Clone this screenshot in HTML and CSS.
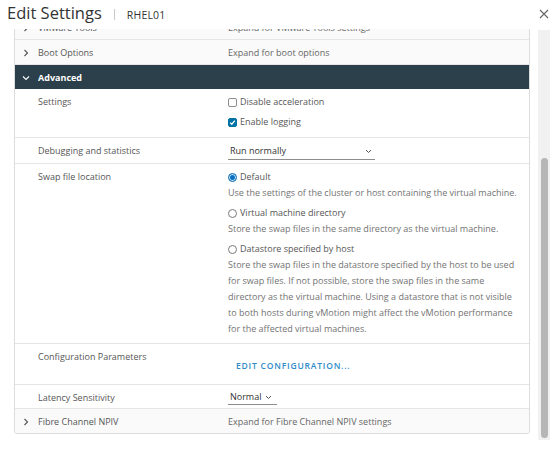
FILE: index.html
```html
<!DOCTYPE html>
<html>
<head>
<meta charset="utf-8">
<link rel="stylesheet" href="styles.css">
</head>
<body>
<div class="modal">
  <header class="hdr">
    <h1 class="title">Edit Settings</h1>
    <span class="sep"></span>
    <span class="sub">RHEL01</span>
    <button class="close" aria-label="Close">
      <svg width="10" height="10" viewBox="0 0 10 10"><path d="M1 1 L9 9 M9 1 L1 9" stroke="#666" stroke-width="1.1" fill="none"/></svg>
    </button>
  </header>
  <div class="main">
    <div class="viewport">
      <div class="panel">
        <div class="row top">
          <span class="arrow"><svg width="6" height="8" viewBox="0 0 6 8"><path d="M1.5 1 L4.5 4 L1.5 7" stroke="#555" stroke-width="1.1" fill="none"/></svg></span>
          <span class="label">VMware Tools</span>
          <span class="value muted">Expand for VMware Tools settings</span>
        </div>
        <div class="row top">
          <span class="arrow"><svg width="6" height="8" viewBox="0 0 6 8"><path d="M1.5 1 L4.5 4 L1.5 7" stroke="#555" stroke-width="1.1" fill="none"/></svg></span>
          <span class="label">Boot Options</span>
          <span class="value muted">Expand for boot options</span>
        </div>
        <div class="row section">
          <span class="arrow"><svg width="8" height="6" viewBox="0 0 8 6"><path d="M1 1.5 L4 4.5 L7 1.5" stroke="#fff" stroke-width="1.1" fill="none"/></svg></span>
          <span class="label">Advanced</span>
        </div>
        <div class="row sub-row settings">
          <span class="arrow"></span>
          <span class="label">Settings</span>
          <div class="value stack">
            <label class="check"><span class="box"></span>Disable acceleration</label>
            <label class="check"><span class="box on"><svg width="7" height="7" viewBox="0 0 7 7"><path d="M1.2 3.6 L2.8 5.2 L5.8 1.6" stroke="#fff" stroke-width="1.3" fill="none"/></svg></span>Enable logging</label>
          </div>
        </div>
        <div class="row sub-row debug">
          <span class="arrow"></span>
          <span class="label">Debugging and statistics</span>
          <div class="value">
            <div class="select wide"><span>Run normally</span><svg width="7" height="5" viewBox="0 0 7 5"><path d="M1 1 L3.5 3.5 L6 1" stroke="#555" stroke-width="1" fill="none"/></svg></div>
          </div>
        </div>
        <div class="row sub-row swap">
          <span class="arrow"></span>
          <span class="label">Swap file location</span>
          <div class="value stack">
            <div class="opt">
              <label class="radio"><span class="dot on"></span>Default</label>
              <p class="desc">Use the settings of the cluster or host containing the virtual machine.</p>
            </div>
            <div class="opt">
              <label class="radio"><span class="dot"></span>Virtual machine directory</label>
              <p class="desc">Store the swap files in the same directory as the virtual machine.</p>
            </div>
            <div class="opt">
              <label class="radio"><span class="dot"></span>Datastore specified by host</label>
              <p class="desc">Store the swap files in the datastore specified by the host to be used for swap files. If not possible, store the swap files in the same directory as the virtual machine. Using a datastore that is not visible to both hosts during vMotion might affect the vMotion performance for the affected virtual machines.</p>
            </div>
          </div>
        </div>
        <div class="row sub-row config">
          <span class="arrow"></span>
          <span class="label">Configuration Parameters</span>
          <div class="value">
            <button class="flat">EDIT CONFIGURATION...</button>
          </div>
        </div>
        <div class="row sub-row latency">
          <span class="arrow"></span>
          <span class="label">Latency Sensitivity</span>
          <div class="value">
            <div class="select narrow"><span>Normal</span><svg width="7" height="5" viewBox="0 0 7 5"><path d="M1 1 L3.5 3.5 L6 1" stroke="#555" stroke-width="1" fill="none"/></svg></div>
          </div>
        </div>
        <div class="row top last">
          <span class="arrow"><svg width="6" height="8" viewBox="0 0 6 8"><path d="M1.5 1 L4.5 4 L1.5 7" stroke="#555" stroke-width="1.1" fill="none"/></svg></span>
          <span class="label">Fibre Channel NPIV</span>
          <span class="value muted">Expand for Fibre Channel NPIV settings</span>
        </div>
      </div>
    </div>
    <div class="scrollbar"><div class="thumb"></div></div>
  </div>
</div>
</body>
</html>
```
FILE: styles.css
```css
* { box-sizing: border-box; }
html, body { margin: 0; padding: 0; }
body {
  width: 560px;
  height: 455px;
  overflow: hidden;
  background: #fff;
  font-family: "Open Sans", "Liberation Sans", sans-serif;
  font-size: 9px;
  color: #565656;
}
.modal { width: 560px; height: 455px; display: flex; flex-direction: column; }
.hdr {
  height: 29px;
  display: flex;
  align-items: baseline;
  padding: 1px 11px 0 7px;
  flex: none;
}
.title {
  margin: 0;
  font-size: 16.5px;
  font-weight: 400;
  line-height: 24px;
  color: #333;
}
.sep {
  display: inline-block;
  width: 1px;
  height: 11px;
  background: #c8c8c8;
  margin: 0 12px;
  position: relative;
  top: 1px;
}
.sub { font-size: 10.5px; color: #333; letter-spacing: 0.2px; }
.close {
  margin-left: auto;
  border: 0;
  background: none;
  padding: 0;
  width: 10px;
  height: 10px;
  align-self: flex-start;
  margin-top: 8px;
  display: flex;
}
.main { display: flex; flex: 1; min-height: 0; }
.viewport {
  margin-left: 14px;
  width: 516px;
  height: 416px;
  overflow: hidden;
}
.panel {
  margin-top: -15px;
  width: 516px;
  border: 1px solid #dcdcdc;
  border-radius: 3px;
  overflow: hidden;
}
.row {
  display: grid;
  grid-template-columns: 23px 190px 1fr;
  align-items: start;
  border-bottom: 1px solid #e6e6e6;
  line-height: 16px;
}
.row.top {
  background: #fafafa;
  height: 25px;
  align-items: center;
  padding-top: 2px;
}
.row.last { border-bottom: 0; height: 24px; }
.arrow { display: flex; align-items: center; padding-left: 8px; height: 16px; }
.row.top .arrow, .row.section .arrow { height: auto; }
.row.section {
  background: #2c404b;
  height: 24px;
  align-items: center;
  border-bottom: 0;
  color: #fff;
  font-weight: 700;
  padding-top: 1px;
}
.row.section .arrow { padding-left: 7px; }
.label { color: #565656; }
.row.section .label { color: #fff; }
.muted { color: #666; }
.sub-row { padding: 5px 0 3px; }
.settings { padding-bottom: 7px; }
.swap { padding-bottom: 6px; }
.config { height: 41px; }
.latency { padding: 5px 0 2px; }
.latency .select { height: 15px; }
.stack { display: flex; flex-direction: column; gap: 4px; }
.check, .radio { display: flex; align-items: center; color: #565656; }
.box {
  width: 9px; height: 9px;
  border: 1px solid #8c8c8c;
  border-radius: 2px;
  margin-right: 3px;
  background: #fff;
  display: flex; align-items: center; justify-content: center;
}
.box.on { background: #0072a3; border-color: #0072a3; }
.dot {
  width: 9px; height: 9px;
  border-radius: 50%;
  border: 1px solid #7a7a7a;
  background: #fff;
  margin-right: 3px;
}
.dot.on {
  border-color: #1e7fbf;
  background: #0b6fc2;
  box-shadow: inset 0 0 0 1px #cfe5f5;
}
.desc { margin: 0; color: #737373; width: 290px; }
.select {
  display: flex;
  align-items: center;
  justify-content: space-between;
  height: 17px;
  border-bottom: 1px solid #8c8c8c;
  color: #333;
  padding: 0 3px 0 2px;
}
.select.wide { width: 147px; }
.select.narrow { width: 49px; justify-content: flex-start; gap: 4px; }
.flat {
  margin-top: 4px;
  border: 0;
  background: none;
  height: 24px;
  padding: 0 8px;
  font-family: "Open Sans", "Liberation Sans", sans-serif;
  font-size: 8.5px;
  font-weight: 600;
  letter-spacing: 0.8px;
  color: #2e8bc7;
}
.scrollbar {
  margin-left: 8px;
  margin-top: 1px;
  width: 12px;
  height: 410px;
  background: #f1f1f1;
  display: flex;
  flex-direction: column;
  justify-content: flex-end;
  padding: 0 2px 2px 3px;
}
.thumb {
  height: 280px;
  background: #b6b6b6;
  border-radius: 4px;
}
```
